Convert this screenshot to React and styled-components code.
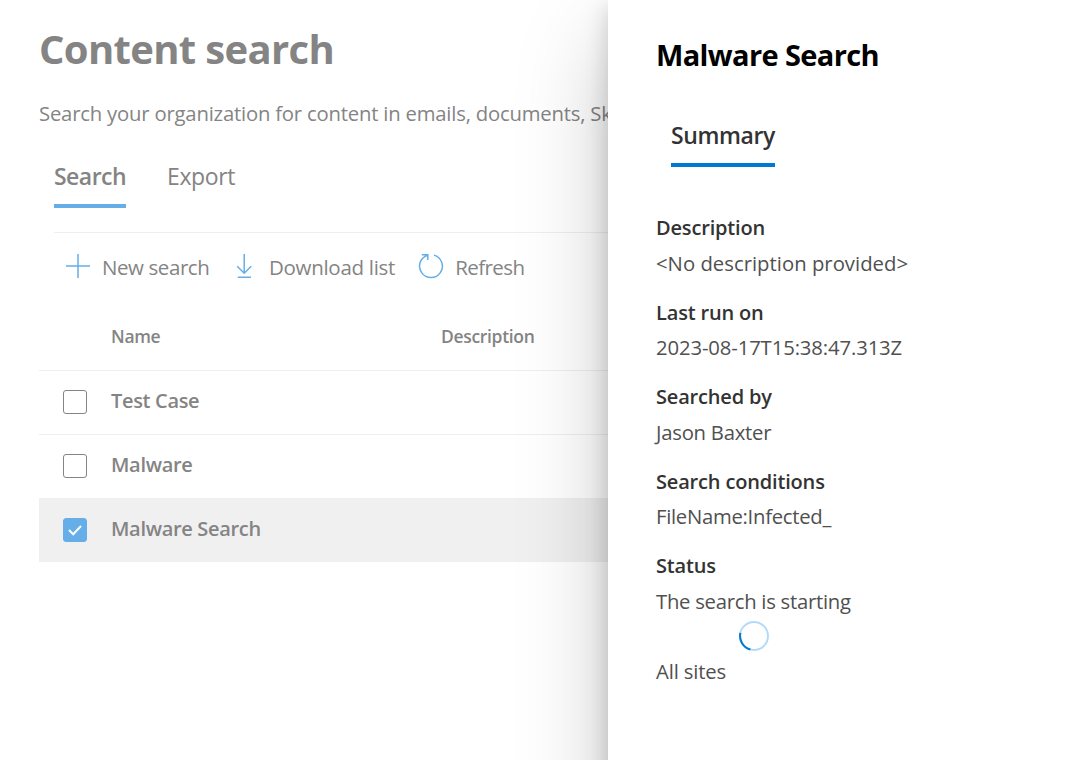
import React from "react";
import styled, { createGlobalStyle, ThemeProvider } from "styled-components";

const theme = {
  faded: "#848484",
  fadedAccent: "#66aee8",
  accent: "#0078d4",
  line: "#efefef",
  text: "#333333",
  textSoft: "#505050",
};

const GlobalStyle = createGlobalStyle`
  * { box-sizing: border-box; }
  body {
    margin: 0;
    background: #fff;
    font-family: "Open Sans", "Noto Sans", sans-serif;
    overflow: hidden;
  }
`;

const Screen = styled.div`
  display: flex;
  width: 1078px;
  height: 760px;
  overflow: hidden;
`;

const Page = styled.main`
  flex: 0 0 608px;
  height: 760px;
  padding: 19px 0 0 39px;
  overflow: hidden;
  white-space: nowrap;
  color: ${(p) => p.theme.faded};
`;

const PageTitle = styled.h1`
  margin: 0;
  font-size: 40px;
  font-weight: 700;
  line-height: 60px;
  letter-spacing: -0.66px;
`;

const Intro = styled.p`
  margin: 19px 0 0;
  font-size: 20.3px;
  line-height: 30px;
  letter-spacing: -0.2px;
`;

const Tabs = styled.nav`
  display: flex;
  gap: 41px;
  padding-left: 15px;
  margin-top: 33px;
`;

const Tab = styled.a`
  height: 47px;
  font-size: 23px;
  line-height: 30px;
  font-weight: ${(p) => (p.$active ? 600 : 400)};
  letter-spacing: ${(p) => p.$track || 0}px;
  color: ${(p) => p.$color};
  border-bottom: 4px solid ${(p) => (p.$active ? p.$bar : "transparent")};
`;

const Toolbar = styled.div`
  display: flex;
  align-items: center;
  height: 68px;
  margin: 24px 0 0 15px;
  padding-left: 11px;
  border-top: 1px solid ${(p) => p.theme.line};
`;

const ToolButton = styled.button`
  display: flex;
  align-items: center;
  gap: ${(p) => p.$gap}px;
  margin: 0 ${(p) => p.$after || 0}px 0 0;
  padding: 0;
  border: 0;
  background: none;
  color: inherit;
  font: 400 20.5px/30px "Open Sans", sans-serif;
  letter-spacing: ${(p) => p.$track}px;
`;

const ToolIcon = styled.svg`
  display: block;
  flex: none;
  margin-top: -1px;
  fill: none;
  stroke: ${(p) => p.theme.fadedAccent};
  stroke-width: 1.5;
`;

const HeaderRow = styled.div`
  display: grid;
  grid-template-columns: 330px 1fr;
  height: 70px;
  padding: 24px 0 0 72px;
  font-size: 17.5px;
  font-weight: 600;
  line-height: 24px;
  letter-spacing: -0.33px;
`;

const Row = styled.div`
  display: flex;
  gap: 24px;
  height: 64px;
  padding: 19px 0 0 24px;
  border-top: 1px solid ${(p) => p.theme.line};
  background: ${(p) => (p.$selected ? "#f0f0f0" : "transparent")};
`;

const Checkbox = styled.span`
  display: grid;
  place-items: center;
  width: 24px;
  height: 24px;
  border: 1px solid ${(p) => (p.$on ? p.theme.fadedAccent : p.theme.faded)};
  border-radius: 3px;
  background: ${(p) => (p.$on ? p.theme.fadedAccent : "#fff")};
`;

const CheckMark = styled.svg`
  fill: none;
  stroke: #fff;
  stroke-width: 2;
`;

const RowName = styled.span`
  margin-top: -3px;
  font-size: 20px;
  font-weight: 600;
  line-height: 28px;
  letter-spacing: -0.32px;
`;

const Panel = styled.aside`
  position: relative;
  z-index: 1;
  flex: 1;
  height: 860px;
  padding: 32px 0 0 48px;
  background: #fff;
  color: ${(p) => p.theme.text};
  box-shadow: 0 38px 86px rgba(0, 0, 0, 0.22), 0 7px 22px rgba(0, 0, 0, 0.18);
`;

const PanelTitle = styled.h2`
  margin: 0;
  color: #000;
  font-size: 29px;
  font-weight: 700;
  line-height: 46px;
  letter-spacing: -0.62px;
`;

const PanelTabs = styled.nav`
  display: flex;
  margin-top: 42px;
  padding-left: 15px;
`;

const Fields = styled.dl`
  display: flex;
  flex-direction: column;
  gap: 13.3px;
  margin: 43.1px 0 0;
`;

const Field = styled.div`
  font-size: 20px;
  line-height: 35.6px;
`;

const Label = styled.dt`
  font-weight: 600;
  letter-spacing: -0.17px;
`;

const Value = styled.dd`
  margin: 0;
  font-size: 20.3px;
  color: ${(p) => p.theme.textSoft};
  letter-spacing: ${(p) => p.$track || 0}px;
`;

const Spinner = styled.svg`
  display: block;
  margin: 1.5px 0 5px 83px;
  fill: none;
  stroke-width: 2;
`;

const Sites = styled.div`
  font-size: 20.3px;
  line-height: 30px;
  letter-spacing: -0.15px;
  color: ${(p) => p.theme.textSoft};
`;

const rows = [
  { name: "Test Case", selected: false },
  { name: "Malware", selected: false },
  { name: "Malware Search", selected: true },
];

const fields = [
  { label: "Description", value: "<No description provided>", track: 0.02 },
  { label: "Last run on", value: "2023-08-17T15:38:47.313Z", track: -0.12 },
  { label: "Searched by", value: "Jason Baxter", track: -0.25 },
  { label: "Search conditions", value: "FileName:Infected_", track: -0.28 },
  { label: "Status", value: "The search is starting", track: -0.27 },
];

export default function App() {
  return (
    <ThemeProvider theme={theme}>
      <GlobalStyle />
      <Screen>
        <Page>
          <PageTitle>Content search</PageTitle>
          <Intro>Search your organization for content in emails, documents, Skype</Intro>
          <Tabs>
            <Tab $active $track={-0.53} $color={theme.faded} $bar={theme.fadedAccent}>Search</Tab>
            <Tab $track={-0.4} $color={theme.faded}>Export</Tab>
          </Tabs>
          <Toolbar>
            <ToolButton $gap={11} $after={26.5} $track={-0.42}>
              <ToolIcon width="26" height="26" viewBox="0 0 26 26">
                <path d="M1 13H25M13 1V25" />
              </ToolIcon>
              New search
            </ToolButton>
            <ToolButton $gap={17} $after={23} $track={-0.28}>
              <ToolIcon width="16" height="26" viewBox="0 0 16 26">
                <path d="M8.2 1V20M1.2 13.2L8.2 20.2L15.2 13.2M1.8 24.2H15" />
              </ToolIcon>
              Download list
            </ToolButton>
            <ToolButton $gap={11} $track={-0.55}>
              <ToolIcon width="26" height="26" viewBox="0 0 26 26">
                <path d="M16 2.1A11.4 11.4 0 1 1 9.6 2.2M3.8 1.7H9.8V7" />
              </ToolIcon>
              Refresh
            </ToolButton>
          </Toolbar>
          <HeaderRow>
            <span>Name</span>
            <span>Description</span>
          </HeaderRow>
          {rows.map((row) => (
            <Row key={row.name} $selected={row.selected}>
              <Checkbox $on={row.selected}>
                {row.selected && (
                  <CheckMark width="14" height="12" viewBox="0 0 14 12">
                    <path d="M1 6L5.2 10.2L13 2" />
                  </CheckMark>
                )}
              </Checkbox>
              <RowName>{row.name}</RowName>
            </Row>
          ))}
        </Page>
        <Panel>
          <PanelTitle>Malware Search</PanelTitle>
          <PanelTabs>
            <Tab $active $track={-0.4} $color={theme.text} $bar={theme.accent}>Summary</Tab>
          </PanelTabs>
          <Fields>
            {fields.map((f) => (
              <Field key={f.label}>
                <Label>{f.label}</Label>
                <Value $track={f.track}>{f.value}</Value>
              </Field>
            ))}
          </Fields>
          <Spinner width="30" height="30" viewBox="0 0 30 30">
            <circle cx="15" cy="15" r="14" stroke="#b3dbf7" />
            <path d="M11.4 28.5A14 14 0 0 1 1.4 11.9" stroke={theme.accent} />
          </Spinner>
          <Sites>All sites</Sites>
        </Panel>
      </Screen>
    </ThemeProvider>
  );
}
